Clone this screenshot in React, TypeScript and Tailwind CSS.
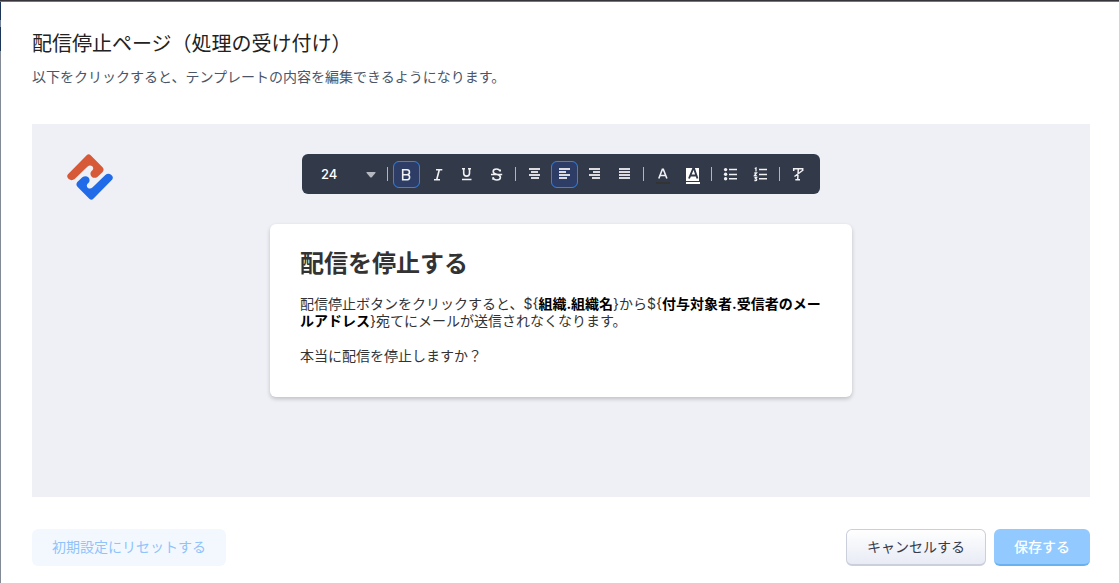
import { useState, type ReactNode } from 'react';
import clsx from 'clsx';

function Glyph({ children }: { children: ReactNode }) {
  return (
    <svg viewBox="1 1 25 25" className="size-[25px]" fill="none" stroke="currentColor" strokeWidth="1.6" aria-hidden="true">
      {children}
    </svg>
  );
}

function Tool({ label, active, onClick, children }: { label: string; active?: boolean; onClick?: () => void; children: ReactNode }) {
  return (
    <button
      type="button"
      aria-label={label}
      aria-pressed={active}
      onClick={onClick}
      className={clsx(
        'flex size-[27px] shrink-0 items-center justify-center rounded-md border text-[#f1f1f4]',
        active ? 'border-[#3182ed] bg-[#2d3d65]' : 'border-transparent',
      )}
    >
      <Glyph>{children}</Glyph>
    </button>
  );
}

function Separator() {
  return <span className="mx-[5px] h-3.5 w-px shrink-0 bg-[#a9b6cb]" />;
}

function Group({ children }: { children: ReactNode }) {
  return <div className="flex gap-[3px]">{children}</div>;
}

type Align = 'center' | 'left' | 'right' | 'justify';

const alignments: { id: Align; label: string; path: string }[] = [
  { id: 'center', label: '中央揃え', path: 'M8 8h11M10 11h7M8 14h11M10 17h8' },
  { id: 'left', label: '左揃え', path: 'M8 8h11M8 11h7M8 14h11M8 17h8' },
  { id: 'right', label: '右揃え', path: 'M8 8h11M12 11h7M8 14h11M11 17h8' },
  { id: 'justify', label: '両端揃え', path: 'M8 8h11M8 11h11M8 14h11M8 17h11' },
];

function Toolbar() {
  const [align, setAlign] = useState<Align>('left');
  const [bold, setBold] = useState(true);
  return (
    <div role="toolbar" aria-label="書式" className="flex h-10 items-center rounded-md bg-[#323949] pr-2 pl-[5px]">
      <div className="relative w-[75px]">
        <select
          aria-label="文字サイズ"
          defaultValue="24"
          className="h-[27px] w-full appearance-none bg-transparent pl-3.5 font-[Inter,sans-serif] text-[13px] font-medium text-white"
        >
          <option>14</option>
          <option>24</option>
          <option>32</option>
        </select>
        <svg viewBox="0 0 10 6" className="pointer-events-none absolute top-[11px] right-1.5 h-1.5 w-2.5" aria-hidden="true">
          <path d="M1 0h8Q10 0 9.400 1L6 5Q5 6 4 5L.6 1Q0 0 1 0Z" fill="#b5b8bf" />
        </svg>
      </div>
      <Separator />
      <Group>
        <Tool label="太字" active={bold} onClick={() => setBold(!bold)}>
          <path d="M9.700 8.800h4.300a2.400 2.400 0 0 1 0 4.900h-4.300zM9.700 13.700h4.800a2.600 2.600 0 0 1 0 5.100H9.700z" />
        </Tool>
        <Tool label="斜体">
          <path d="M13 8.700h6.300M11 18.800h6M16.300 8.700l-2.600 10" />
        </Tool>
        <Tool label="下線">
          <path d="M10.700 7.500v4.700a2.900 2.900 0 0 0 5.800 0V7.500M9 7.700h3M15 7.700h3M9 18.500h9.500" />
        </Tool>
        <Tool label="取り消し線">
          <path d="M17.200 10.400V8.500M17 10.300c-.4-1.600-1.700-2.300-3.500-2.300-2 0-3.300.9-3.300 2.500 0 1.400 1 2.200 3.400 2.800 2.600.6 3.800 1.400 3.800 3 0 1.700-1.400 2.700-3.600 2.700-2 0-3.400-.9-3.700-2.600M10 18.800v-2.500M8 13.500h11.200" />
        </Tool>
      </Group>
      <Separator />
      <Group>
        {alignments.map((a) => (
          <Tool key={a.id} label={a.label} active={align === a.id} onClick={() => setAlign(a.id)}>
            <path d={a.path} stroke="#dcdce0" strokeWidth="1.800" />
          </Tool>
        ))}
      </Group>
      <Separator />
      <Group>
        <Tool label="文字色">
          <path d="M9.800 17.500l3.600-9.300h.9l3.600 9.300M11 14.500h5.600" />
          <path d="M7 22h14" stroke="#333333" strokeWidth="2" />
        </Tool>
        <Tool label="背景色">
          <path d="M7 7h13v13H7z" fill="#ffffff" stroke="none" />
          <path d="M10 17.500l4-9.500h1.200l3.300 9.500M11.500 14.500h6" stroke="#323949" strokeWidth="1.900" />
          <path d="M7 22h14" stroke="#ffffff" strokeWidth="2" />
        </Tool>
      </Group>
      <Separator />
      <Group>
        <Tool label="箇条書き">
          <path d="M12 8.500h8M12 13.500h8M12 17.700h8" />
          <g fill="currentColor" stroke="none">
            <circle cx="8.600" cy="8.600" r="1.700" />
            <circle cx="8.600" cy="13.300" r="1.700" />
            <circle cx="8.600" cy="17.800" r="1.700" />
          </g>
        </Tool>
        <Tool label="番号付きリスト">
          <path d="M12 8.500h8M12 13.500h8M12 17.700h8" />
          <path d="M7.700 7.500l1.300-.5v3.500M7.300 12h2.200l-2 2.600h2.300M7.400 16.500h2.200l-1 1.300c1.600 0 1.400 1.900 0 1.900H7.400" strokeWidth="1.300" />
        </Tool>
      </Group>
      <Separator />
      <Tool label="書式をクリア">
        <path d="M8.700 10V7.800h9V10M13.300 7.800l-.6 10.900M10.300 18.700h4.700M17.500 9.500L9.500 15.500" strokeWidth="1.500" />
      </Tool>
    </div>
  );
}

function Logo() {
  const d =
    'M54 102L110 45Q116 39 122 45L157 80Q164 87 158 95L143 109Q133 116 125 109Q118 101 124 93L128 89Q132 82 126 77Q119 73 112 79L74 116Q65 123 56 116Q48 109 54 102Z';
  return (
    <svg viewBox="51 41 138 138" className="size-[46px]" role="img" aria-label="ロゴ">
      <path d={d} fill="#d65a38" />
      <path d={d} fill="#216ae8" transform="rotate(180 120 110)" />
    </svg>
  );
}

export default function App() {
  return (
    <div className="flex min-h-screen flex-col bg-white font-[Inter,'Noto_Sans_CJK_JP',sans-serif] text-sm">
      <div className="h-0.5 shrink-0 border-b border-[#77747b] bg-[#37343b]" />
      <div className="flex flex-1">
        <div className="flex w-px shrink-0 flex-col bg-[#848996]">
          <div className="h-[18px] bg-[#1c3658]" />
          <div className="h-[7px] bg-[#72829a]" />
          <div className="h-6 bg-[#1c3658]" />
        </div>
        <main className="flex min-w-0 flex-1 flex-col pt-[27px] pr-[29px] pb-[17px] pl-[31px]">
          <h1 className="text-xl leading-[30px] text-[#222222]">配信停止ページ（処理の受け付け）</h1>
          <p className="mt-2 leading-5 text-[#4a5568]">
            以下をクリックすると、テンプレートの内容を編集できるようになります。
          </p>
          <section className="mt-[37px] grid flex-1 grid-cols-[1fr_minmax(0,582px)_1fr] items-start bg-[#eff0f5] px-[35px] py-[30px]">
            <Logo />
            <div className="flex flex-col items-center gap-[30px]">
              <Toolbar />
              <article className="w-full rounded-md bg-white px-[30px] pt-[23px] pb-[33px] leading-[17px] text-[#333333] shadow-[0_2px_4px_rgba(0,0,0,0.2)]">
                <h2 className="text-2xl leading-[34px] font-bold">配信を停止する</h2>
                <p className="mt-3.5">
                  配信停止ボタンをクリックすると、{'${'}
                  <strong className="text-black">組織.組織名</strong>
                  {'}'}から{'${'}
                  <strong className="text-black">付与対象者.受信者のメールアドレス</strong>
                  {'}'}宛てにメールが送信されなくなります。
                </p>
                <p className="mt-[18px]">本当に配信を停止しますか？</p>
              </article>
            </div>
          </section>
          <footer className="mt-8 flex items-center justify-between">
            <button type="button" className="h-[37px] rounded-md border-b-2 border-transparent bg-[#f3f8ff] px-5 text-[#8fc3fa]">
              初期設定にリセットする
            </button>
            <div className="flex gap-2">
              <button
                type="button"
                className="h-[37px] rounded-md border border-b-2 border-[#cbcfdb] bg-linear-to-b from-white to-[#e8ebf5] px-5 text-[#363c4a]"
              >
                キャンセルする
              </button>
              <button type="button" className="h-[37px] rounded-md border-b-2 border-[#6bb0f0] bg-[#92caff] px-5 font-medium text-white">
                保存する
              </button>
            </div>
          </footer>
        </main>
      </div>
    </div>
  );
}
